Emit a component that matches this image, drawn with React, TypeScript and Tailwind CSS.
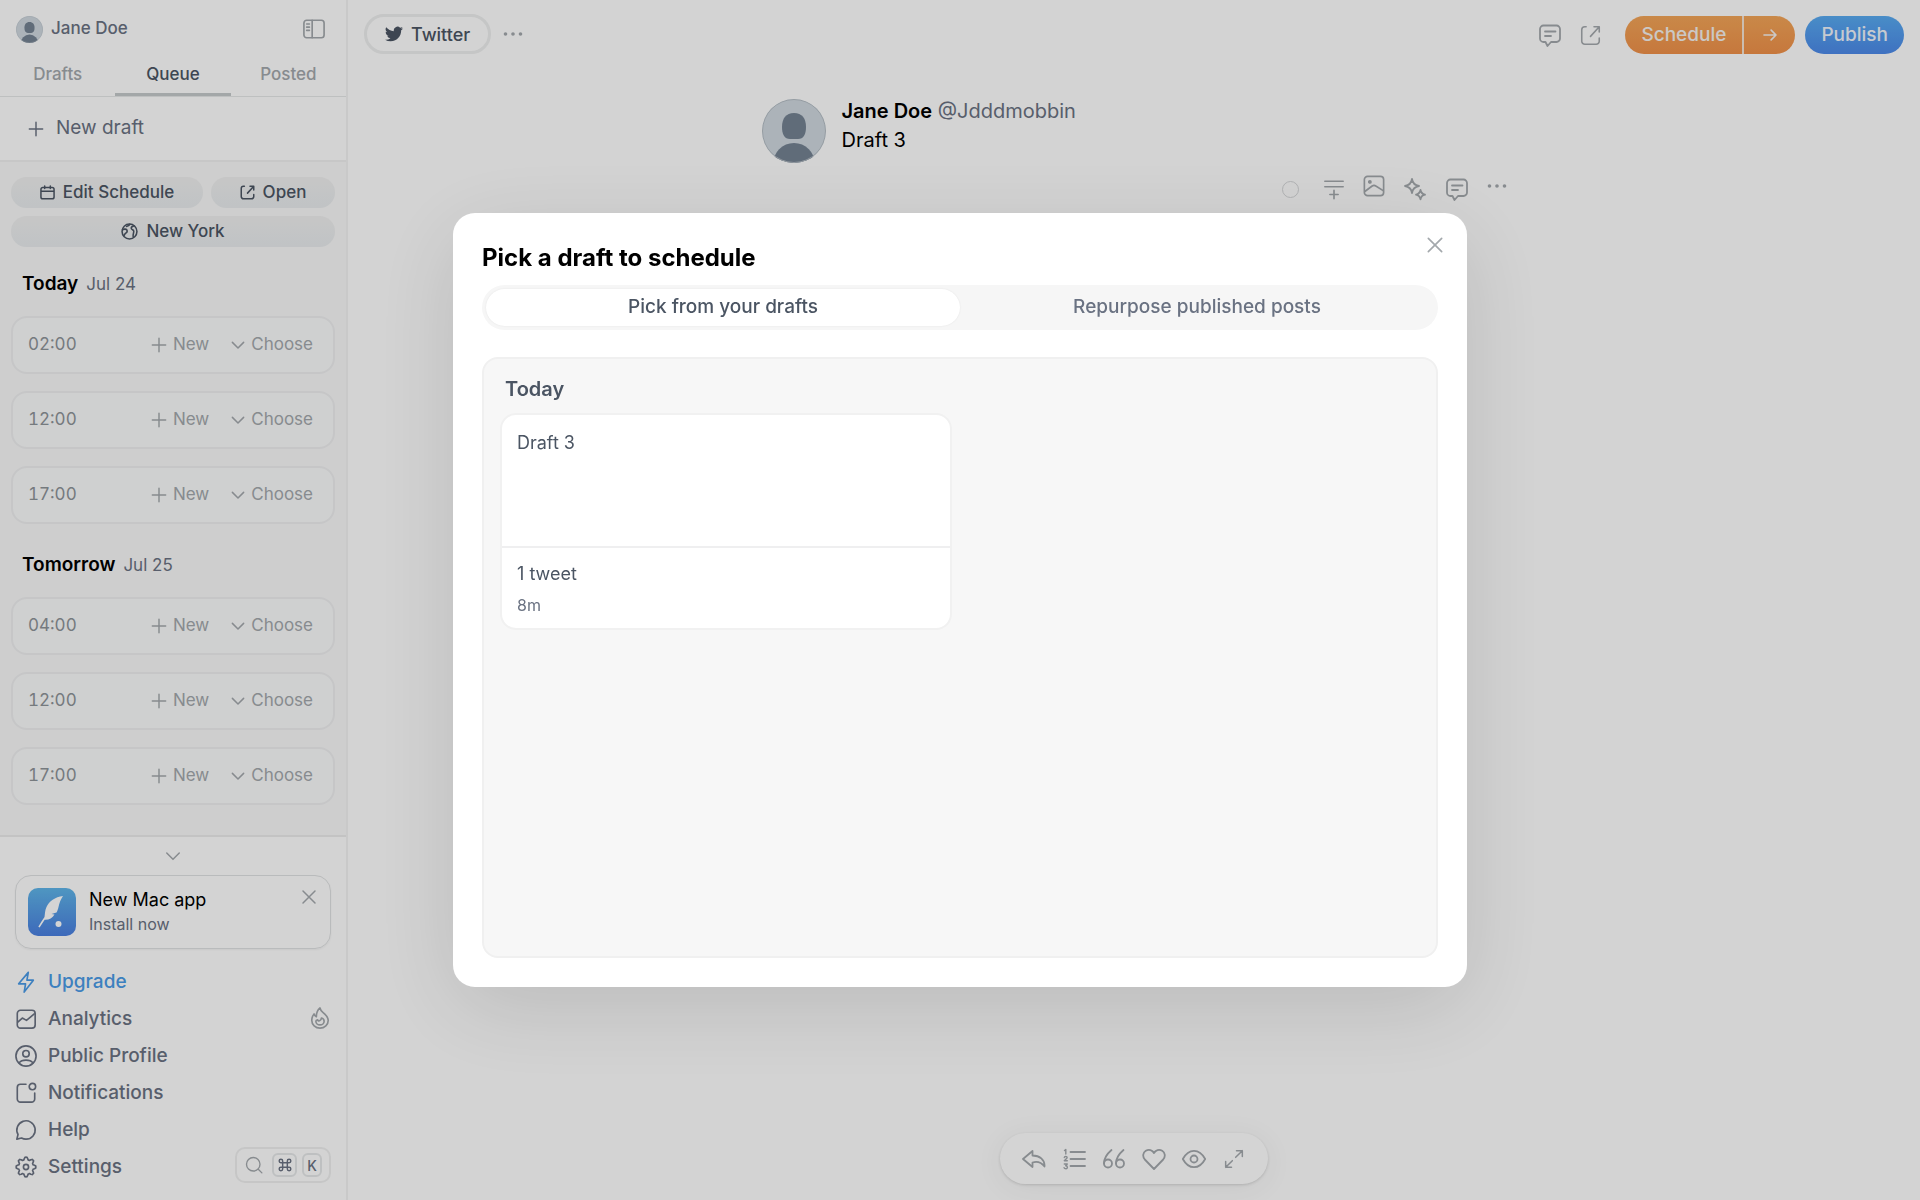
import type { ReactNode } from 'react';

type IconProps = { className?: string; children: ReactNode; stroke?: number };

function Icon({ className = 'size-[22px]', children, stroke = 1.8 }: IconProps) {
  return (
    <svg
      viewBox="0 0 24 24"
      fill="none"
      stroke="currentColor"
      strokeWidth={stroke}
      strokeLinecap="round"
      strokeLinejoin="round"
      aria-hidden="true"
      className={`shrink-0 ${className}`}
    >
      {children}
    </svg>
  );
}

const gearPath = Array.from({ length: 64 }, (_, i) => {
  const angle = (i / 64) * Math.PI * 2;
  const wave = Math.max(-1, Math.min(1, 1.5 * Math.cos(angle * 8)));
  const r = 9.4 + 1.3 * wave;
  return `${i ? 'L' : 'M'}${(12 + r * Math.sin(angle)).toFixed(2)} ${(12 - r * Math.cos(angle)).toFixed(2)}`;
}).join('') + 'z';

const paths = {
  plus: <path d="M2 12h20M12 2v20" />,
  chevron: <path d="M4.500 8.500l7.500 7.500 7.500-7.500" />,
  close: <path d="M4 4l16 16M20 4L4 20" />,
  calendar: (
    <path d="M7.500 1.500v4M16.500 1.500v4M1.500 10h21M4.500 4h15a3 3 0 013 3v12a3 3 0 01-3 3h-15a3 3 0 01-3-3V7a3 3 0 013-3z" />
  ),
  open: (
    <path d="M22 2h-6M22 2v6M22 2l-10 11M22 15v3.500a3.500 3.500 0 01-3.500 3.500h-13A3.500 3.500 0 012 18.500v-13A3.500 3.500 0 015.500 2h1.500" />
  ),
  globe: (
    <>
      <circle cx="12" cy="12" r="10.500" />
      <path d="M2 9.500c2.500-1.500 6-1 6.500.8s.3 3-1.500 3.700-1.800 2.500-3 4M18.500 4c-1 .5-4.500 1-4 3.500s3.200 1.500 3.500 4-1.500 4-.8 8M12.500 2c-.5 2-3 1.500-4.500 3" />
    </>
  ),
  comment: (
    <path d="M7 8.500h10.500M7 13h6M5.500 2.500h13A3.500 3.500 0 0122 6v9.500a3.500 3.500 0 01-3.500 3.500h-5.500L9.500 23 7.500 19h-2A3.500 3.500 0 012 15.500V6a3.500 3.500 0 013.500-3.500z" />
  ),
  bolt: <path d="M14.500 1.500L4 14h7.500l-1.500 9L20 10h-7z" />,
  analytics: (
    <>
      <rect x="2.5" y="2.5" width="19.500" height="19.500" rx="3.5" />
      <path d="M3 15.500l5-4.500 4.500 2.500L21 6.500" />
    </>
  ),
  profile: (
    <>
      <circle cx="12" cy="12" r="11" />
      <circle cx="12" cy="9.500" r="3.500" />
      <path d="M4.500 19.500c1.500-2 4-3 7.500-3s6 1 7.500 3" />
    </>
  ),
  notify: (
    <>
      <path d="M12 2.500H6A3.500 3.500 0 002.500 6v12.500A3.500 3.500 0 006 22h12a3.500 3.500 0 003.500-3.500V12" />
      <circle cx="19" cy="5" r="3.500" />
    </>
  ),
  help: <path d="M12 22a10 10 0 10-8.700-5.100L2 22l5.100-1.300A10 10 0 0012 22z" />,
  settings: (
    <>
      <circle cx="12" cy="12" r="2.800" />
      <path d={gearPath} />
    </>
  ),
  flame: (
    <>
      <path d="M12 1c.5 3.500 3 4.500 5 6.500s4 4 4 7a9 8.500 0 01-18 0c0-3 1-5 2.500-7 .3 1.500 1 2.500 2.500 3C8 7 9 3.500 12 1z" />
      <path d="M7.500 15.500a4.500 4 0 009 0c0-1.500-1-3-3-3.500 0 1.500-.5 2.500-2 3-1.200.4-2-.2-2-1-1.300.3-2 1-2 1.500z" />
    </>
  ),
  search: (
    <>
      <circle cx="11" cy="11" r="9" />
      <path d="M18 18L22.500 22.500" />
    </>
  ),
  arrow: <path d="M4 12h16M13.500 5.500L20 12l-6.500 6.500" />,
  addBlock: <path d="M2 3.500h20M2 9.500h20M12 13.500v9M7.500 18h9" />,
  image: (
    <>
      <rect x="1.500" y="1.500" width="21" height="21" rx="3.500" />
      <path d="M2 18l8-6q2-1.500 4 0l8 5" />
      <circle cx="7.500" cy="7.500" r="1.200" fill="currentColor" />
    </>
  ),
  sparkles: (
    <path d="M9 2c.7 4.500 2.500 6.300 7 7-4.500.7-6.300 2.500-7 7-.7-4.500-2.500-6.300-7-7 4.500-.7 6.300-2.500 7-7zM17.500 13c.5 3 1.500 4 4.500 4.700-3 .6-4 1.700-4.500 4.700-.6-3-1.600-4.100-4.500-4.700 2.900-.7 3.900-1.700 4.500-4.700z" />
  ),
  dots: (
    <g fill="currentColor">
      <circle cx="3" cy="12" r="1.300" />
      <circle cx="12" cy="12" r="1.300" />
      <circle cx="21" cy="12" r="1.300" />
    </g>
  ),
  reply: <path d="M10.500 4L1 12l9.500 8v-4.500c4.500-1.500 8.500-.5 12 4 .5-7-5-11-12-11z" />,
  list: (
    <>
      <path d="M8.500 5H23M8.500 12H23M8.500 19H23" />
      <path strokeWidth="1.400" d="M2.500 3.500l1.300-1V7M2.300 10.500c.2-1.500 3-1.300 2.800.2-.1.900-2 1.800-2.800 3h3M2.300 17h3l-1.600 1.700c2.300 0 2.100 3 .3 3-1 0-1.700-.4-1.900-1" />
    </>
  ),
  quote: (
    <>
      <path d="M9.500 3C6 6 2 11 2 16.500M21.500 3c-3.500 3-7.500 8-7.500 13.500" />
      <circle cx="6" cy="16.500" r="4" />
      <circle cx="18" cy="16.500" r="4" />
    </>
  ),
  heart: (
    <path d="M12 22L2.800 12.500C.2 9.500 1 5.500 3.800 3.800 6.800 2 10.500 3 12 6c1.500-3 5.200-4 8.200-2.200 2.800 1.700 3.600 5.700 1 8.700z" />
  ),
  eye: (
    <>
      <path d="M.8 12C3.500 7 7.200 3.800 12 3.800S20.500 7 23.200 12c-2.700 5-6.400 8.200-11.200 8.200S3.500 17 .8 12z" />
      <circle cx="12" cy="12" r="3.500" />
    </>
  ),
  expand: <path d="M14 10l8-8M15 2h7v7M10 14l-8 8M2 15v7h7" />,
  sidebar: (
    <>
      <rect x="1" y="2.500" width="22" height="19" rx="3" />
      <path d="M10 2.500v19M4 6.500h3M4 10h3M4 13.500h3" />
    </>
  ),
};

function Avatar({ className }: { className: string }) {
  return (
    <svg viewBox="0 0 64 64" className={`shrink-0 rounded-full ${className}`} role="img" aria-label="Jane Doe">
      <rect width="64" height="64" fill="#cfd8df" />
      <path d="M32 14c8 0 12 5.500 12 14 0 7.500-2.500 12-8 12h-8c-5.500 0-8-4.500-8-12 0-8.500 4-14 12-14z" fill="#748292" />
      <ellipse cx="32" cy="65" rx="21" ry="21" fill="#748292" />
      <circle cx="32" cy="32" r="31.500" fill="none" stroke="#b4bcc3" />
    </svg>
  );
}

function Slot({ time }: { time: string }) {
  return (
    <li className="flex h-[58px] items-center rounded-2xl border-2 border-[#eeeff0] bg-[#f9fafa] pr-5 pl-[15px] text-[#a3a8ac]">
      <time className="flex-1 text-[#8d9398] tabular-nums">{time}</time>
      <button className="flex items-center gap-1.5">
        <Icon className="size-4" stroke={2.2}>{paths.plus}</Icon>
        New
      </button>
      <button className="ml-5 flex items-center gap-1">
        <Icon className="size-[18px]" stroke={2}>{paths.chevron}</Icon>
        Choose
      </button>
    </li>
  );
}

function Day({ name, date, slots }: { name: string; date: string; slots: string[] }) {
  return (
    <section>
      <h2 className="flex h-[69px] items-center gap-2 pt-1.5 pl-[11px] text-[19px] font-semibold text-black">
        {name} <span className="text-[17px] font-normal text-gray-500">{date}</span>
      </h2>
      <ul className="flex flex-col gap-[17px]">
        {slots.map((t) => (
          <Slot key={t} time={t} />
        ))}
      </ul>
    </section>
  );
}

const pill =
  'flex h-[31px] items-center justify-center gap-2 rounded-full bg-linear-to-b from-[#efefef] to-[#e8ebed] font-medium text-[#4b5563]';

const menu = [
  { label: 'Upgrade', icon: paths.bolt },
  { label: 'Analytics', icon: paths.analytics },
  { label: 'Public Profile', icon: paths.profile },
  { label: 'Notifications', icon: paths.notify },
  { label: 'Help', icon: paths.help },
  { label: 'Settings', icon: paths.settings },
];

function AppLogo() {
  return (
    <svg viewBox="0 0 48 48" className="size-12 shrink-0" aria-hidden="true">
      <defs>
        <linearGradient id="logo" x1="0" y1="0" x2="0" y2="1">
          <stop offset="0" stopColor="#5fb5e8" />
          <stop offset="1" stopColor="#4a7fe0" />
        </linearGradient>
      </defs>
      <rect width="48" height="48" rx="10" fill="url(#logo)" />
      <path d="M35 8c-8 1-14 5.500-16.500 11-1.600 3.500-1.500 6.500-2 10-2.200 3.200-4.200 6.400-6.200 9.700l1.300.8c1.900-2.800 3.400-5.300 5.100-7.700 4.300.2 7.800-1.800 9.800-5.300l-3-.5 5-1.500c1.100-1.800 1.500-3.500 2-5.500 1-4 2-7.500 4.500-11z" fill="#fff" />
      <circle cx="30.500" cy="36" r="3" fill="#fff" />
    </svg>
  );
}

function Sidebar() {
  return (
    <aside className="flex w-[348px] shrink-0 flex-col border-r-2 border-[#f2f2f2] text-[17px]">
      <div className="flex h-[58px] items-center pr-[21px] pl-4">
        <Avatar className="size-[27px]" />
        <span className="ml-2 flex-1 font-medium text-gray-500">Jane Doe</span>
        <button aria-label="Toggle sidebar" className="text-[#a3a8ac]">
          <Icon className="size-[22px]">{paths.sidebar}</Icon>
        </button>
      </div>
      <nav className="grid h-[39px] grid-cols-3 border-b border-[#e5e7e7] font-medium text-[#a3a8ac]">
        <button className="pb-1">Drafts</button>
        <button className="border-b-3 border-[#c4c9cb] pb-px text-[#4b5563]">Queue</button>
        <button className="pb-1">Posted</button>
      </nav>
      <button className="flex h-[65px] shrink-0 items-center gap-3 border-b-2 border-[#f0f0f0] pl-7 text-[19px] text-gray-500">
        <Icon className="size-4" stroke={2.2}>{paths.plus}</Icon>
        New draft
      </button>
      <div className="min-h-0 flex-1 overflow-hidden bg-[#f8f8f8] px-[11px] pt-[15px]">
        <div className="flex gap-2">
          <button className={`${pill} flex-[192]`}>
            <Icon className="size-[15px]" stroke={2.4}>{paths.calendar}</Icon>
            Edit Schedule
          </button>
          <button className={`${pill} flex-[124]`}>
            <Icon className="size-[15px]" stroke={2.4}>{paths.open}</Icon>
            Open
          </button>
        </div>
        <button className={`${pill} mt-2 w-full`}>
          <Icon className="size-[17px]" stroke={2.2}>{paths.globe}</Icon>
          New York
        </button>
        <Day name="Today" date="Jul 24" slots={['02:00', '12:00', '17:00']} />
        <div className="h-1" />
        <Day name="Tomorrow" date="Jul 25" slots={['04:00', '12:00', '17:00']} />
      </div>
      <div className="flex flex-col border-t-2 border-[#ebebeb] px-[15px] pb-[15px]">
        <button aria-label="Collapse" className="mx-auto flex h-[38px] items-center text-[#a3a8ac]">
          <Icon className="size-5">{paths.chevron}</Icon>
        </button>
        <div className="flex items-center rounded-2xl border border-[#dfe1e2] px-3 py-3 shadow-xs">
          <AppLogo />
          <div className="ml-[13px] flex-1 text-[16px] leading-6">
            <p className="text-[18px] text-black">New Mac app</p>
            <a href="#install" className="text-gray-500">Install now</a>
          </div>
          <button aria-label="Dismiss" className="self-start text-[#a3a8ac]">
            <Icon className="size-[18px]" stroke={2}>{paths.close}</Icon>
          </button>
        </div>
        <div className="flex items-end justify-between pt-[14px]">
          <nav className="flex flex-col text-[19px] font-medium text-gray-500">
            {menu.map(({ label, icon }) => (
              <a
                key={label}
                href={`#${label}`}
                className="flex items-center gap-[11px] py-1 leading-[29px] first:text-[#4a9ae6]"
              >
                <Icon className="size-[22px]">{icon}</Icon>
                {label}
              </a>
            ))}
          </nav>
          <div className="flex flex-col items-end justify-between self-stretch pt-11 pb-0.5 text-[#a3a8ac]">
            <Icon className="size-[22px]">{paths.flame}</Icon>
            <button aria-label="Search" className="flex h-9 items-center gap-[5px] rounded-[10px] border-2 border-[#eeefef] pr-[7px] pl-2 text-[14px] text-gray-500">
              <Icon className="mr-1 size-[18px] text-[#a3a8ac]">{paths.search}</Icon>
              <kbd className="flex h-6 w-[25px] items-center justify-center rounded-md border-2 border-[#e5e7e8] font-sans">
                <svg viewBox="0 0 24 24" fill="none" stroke="currentColor" strokeWidth="2.500" className="size-[14px]" aria-label="Command">
                  <path d="M8 8h8v8H8zM8 8H5a3 3 0 113-3zM16 8V5a3 3 0 113 3zM16 16h3a3 3 0 11-3 3zM8 16v3a3 3 0 11-3-3z" />
                </svg>
              </kbd>
              <kbd className="flex h-6 w-5 items-center justify-center rounded-md border-2 border-[#e5e7e8] font-['Inter',sans-serif] font-medium">K</kbd>
            </button>
          </div>
        </div>
      </div>
    </aside>
  );
}

function ToolButton({ label, children, className = 'size-6' }: { label: string; children: ReactNode; className?: string }) {
  return (
    <button aria-label={label}>
      <Icon className={className}>{children}</Icon>
    </button>
  );
}

function Editor() {
  return (
    <main className="flex min-w-0 flex-1 flex-col">
      <header className="flex h-[68px] items-center px-4 text-[19px] text-[#a3a8ac]">
        <button className="flex h-10 items-center gap-2 rounded-full border-3 border-[#edeeee] px-[18px] text-[18px] font-medium text-[#4b5563]">
          <svg viewBox="0 0 24 24" fill="currentColor" className="size-[18px]" aria-hidden="true">
            <path d="M23.950 4.570a10 10 0 01-2.820.77 4.960 4.960 0 002.160-2.720c-.95.560-2.010.970-3.130 1.190a4.920 4.920 0 00-8.380 4.480A13.930 13.930 0 011.640 3.160a4.920 4.920 0 001.520 6.570 4.900 4.900 0 01-2.230-.61v.06a4.920 4.920 0 003.950 4.830 5 5 0 01-2.210.08 4.940 4.940 0 004.600 3.420A9.870 9.870 0 010 19.540a14 14 0 007.550 2.210c9.050 0 14-7.500 14-13.990 0-.21 0-.42-.02-.63a9.940 9.940 0 002.460-2.550z" />
          </svg>
          Twitter
        </button>
        <button aria-label="More" className="ml-3">
          <Icon className="size-5">{paths.dots}</Icon>
        </button>
        <div className="ml-auto flex items-center pt-0.5">
          <div className="flex items-center gap-[18px]">
            <ToolButton label="Comments">{paths.comment}</ToolButton>
            <ToolButton label="Open" className="size-[21px]">{paths.open}</ToolButton>
          </div>
          <div className="ml-6 flex h-[38px] overflow-hidden rounded-full bg-linear-to-b from-[#f2a558] to-[#ef9049] font-medium text-[#f4f1ee]">
            <button className="border-r-2 border-[#f4e4d4] px-4">Schedule</button>
            <button aria-label="Schedule options" className="pr-4 pl-[17px]">
              <Icon className="size-[18px]" stroke={2.2}>{paths.arrow}</Icon>
            </button>
          </div>
          <button className="ml-[10px] h-[38px] rounded-full bg-linear-to-b from-[#58aaf0] to-[#4c89e8] px-4 font-medium text-[#eef3fa]">
            Publish
          </button>
        </div>
      </header>
      <article className="mx-auto w-full max-w-[745px] flex-1 pt-[31px]">
        <div className="flex gap-4">
          <Avatar className="size-16" />
          <div className="-mt-0.5 text-[20px] leading-[29px]">
            <p className="text-gray-500">
              <b className="font-semibold text-black">Jane Doe</b> @Jdddmobbin
            </p>
            <p className="text-black">Draft 3</p>
          </div>
        </div>
        <div className="flex items-center justify-end gap-[18px] pt-3 text-[#a3a8ac]">
          <span className="mr-1.5 size-[17px] rounded-full border border-[#d5d7d9]" />
          <ToolButton label="Add post" className="size-[22px]">{paths.addBlock}</ToolButton>
          <ToolButton label="Add image" className="mb-1.5 size-[22px]">{paths.image}</ToolButton>
          <ToolButton label="AI">{paths.sparkles}</ToolButton>
          <ToolButton label="Comment">{paths.comment}</ToolButton>
          <ToolButton label="More" className="mb-1.5 size-5">{paths.dots}</ToolButton>
        </div>
      </article>
      <div className="mx-auto mb-4 flex h-[51px] items-center gap-4 rounded-full bg-white px-[22px] text-[#a3a8ac] shadow-[0_1px_3px_rgba(0,0,0,0.14),0_4px_30px_rgba(0,0,0,0.06)]">
        <ToolButton label="Reply">{paths.reply}</ToolButton>
        <ToolButton label="Numbering">{paths.list}</ToolButton>
        <ToolButton label="Quote">{paths.quote}</ToolButton>
        <ToolButton label="Like">{paths.heart}</ToolButton>
        <ToolButton label="Preview">{paths.eye}</ToolButton>
        <ToolButton label="Expand" className="mx-0.5 size-5">{paths.expand}</ToolButton>
      </div>
    </main>
  );
}

function DraftPicker() {
  return (
    <div className="fixed inset-0 grid place-items-center bg-black/17">
      <section
        role="dialog"
        aria-label="Pick a draft to schedule"
        className="relative w-full max-w-[1014px] rounded-[22px] bg-white px-[29px] pt-[30px] pb-[29px] shadow-[0_20px_90px_rgba(0,0,0,0.12)]"
      >
        <button aria-label="Close" className="absolute top-[22px] right-[22px] text-[#a3a8ac]">
          <Icon className="size-5" stroke={2}>{paths.close}</Icon>
        </button>
        <h1 className="text-[24px] leading-[30px] font-bold text-black">Pick a draft to schedule</h1>
        <div className="mt-3 grid grid-cols-2 rounded-full bg-[#f6f6f6] p-1 text-[19px] font-medium">
          <button className="h-[37px] rounded-full bg-white text-[#4b5563] shadow-[0_0_2px_rgba(0,0,0,0.08)]">
            Pick from your drafts
          </button>
          <button className="text-gray-500">Repurpose published posts</button>
        </div>
        <div className="mt-[27px] min-h-[601px] rounded-2xl border-2 border-[#f0f0f0] bg-[#f7f7f7] px-4 pt-[15px]">
          <h2 className="pl-[5px] text-[20px] leading-[30px] font-semibold text-[#4b5563]">Today</h2>
          <div className="mt-[9px] grid grid-cols-2 gap-4">
            <a href="#draft" className="rounded-2xl border-2 border-[#f1f1f1] bg-white text-[18px] text-[#4b5563]">
              <p className="h-[131px] px-[15px] pt-4 leading-6">Draft 3</p>
              <div className="border-t-2 border-[#efeff0] px-[15px] pt-[14px] pb-[13px] leading-6">
                <p>1 tweet</p>
                <p className="mt-[9px] text-[16px] leading-5 text-gray-500">8m</p>
              </div>
            </a>
          </div>
        </div>
      </section>
    </div>
  );
}

export default function App() {
  return (
    <div className="flex h-screen bg-[#fefefe] font-['Inter',sans-serif]">
      <Sidebar />
      <Editor />
      <DraftPicker />
    </div>
  );
}
